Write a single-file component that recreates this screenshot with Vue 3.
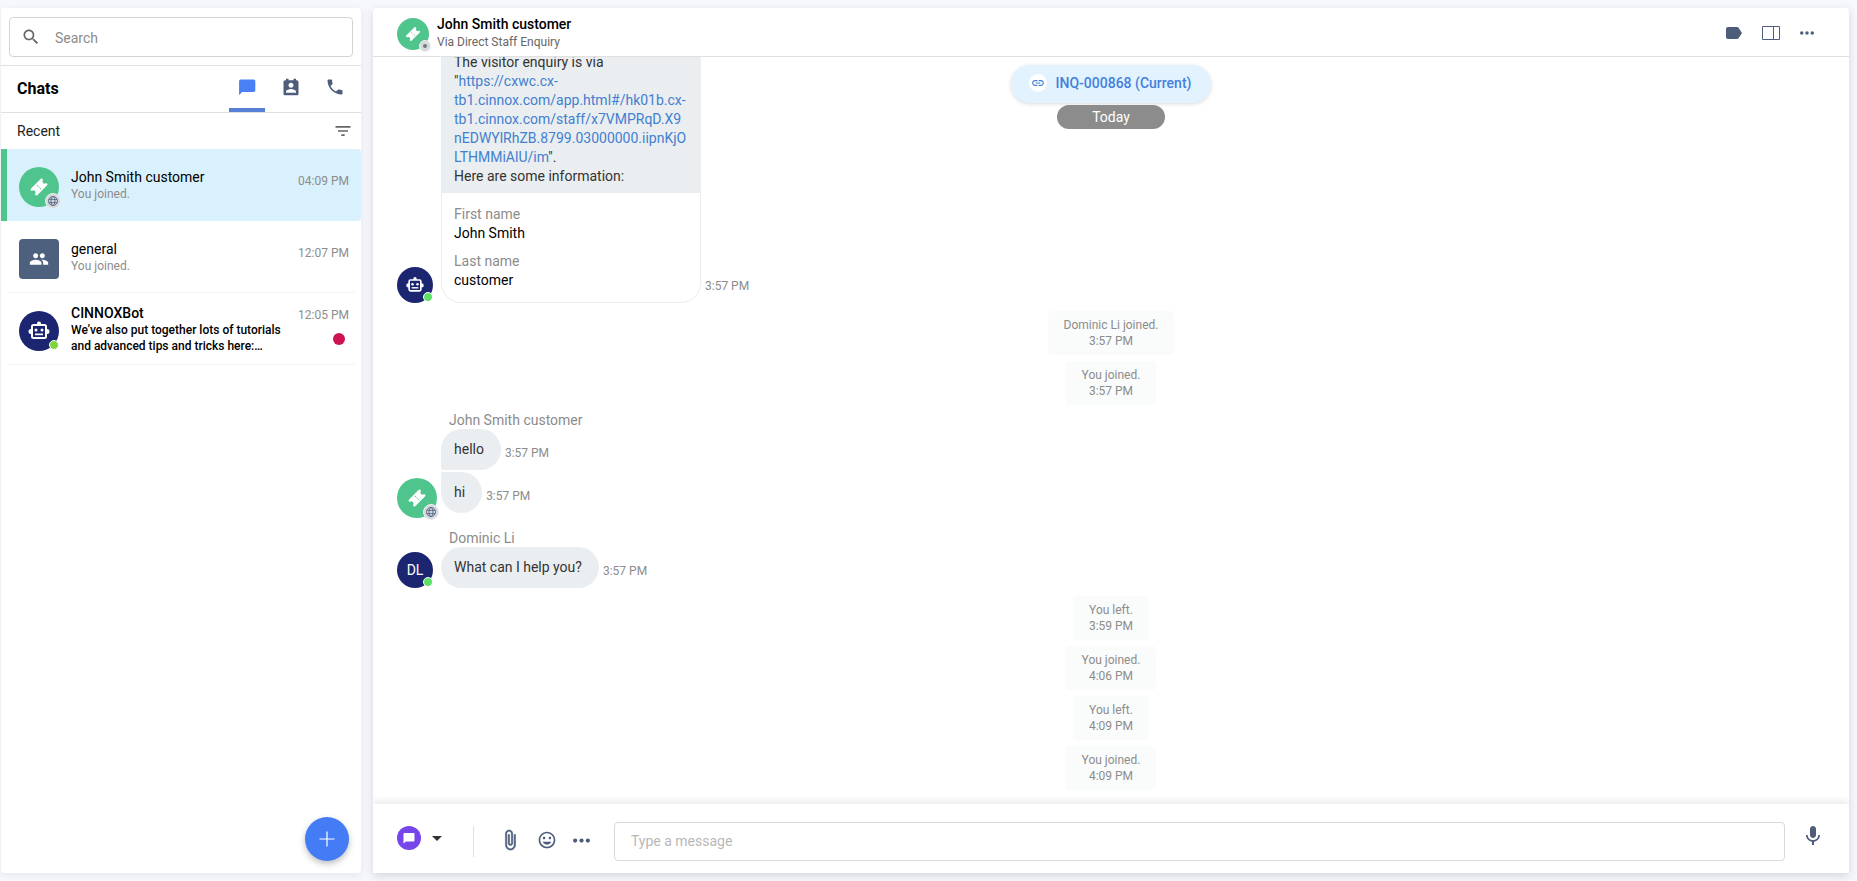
<template>
  <svg class="sprite" aria-hidden="true">
    <symbol id="i-search" viewBox="0 0 24 24">
      <path d="M15.5 14h-.79l-.28-.27C15.41 12.59 16 11.11 16 9.5 16 5.91 13.09 3 9.5 3S3 5.91 3 9.5 5.91 16 9.5 16c1.61 0 3.09-.59 4.23-1.57l.27.28v.79l5 4.99L20.49 19l-4.99-5zm-6 0C7.01 14 5 11.99 5 9.5S7.01 5 9.5 5 14 7.01 14 9.5 11.99 14 9.5 14z" />
    </symbol>
    <symbol id="i-chat" viewBox="0 0 24 24">
      <path d="M20 3H4.500c-1.100 0-2 .9-2 2v17l3.500-4H20c1.100 0 2-.9 2-2V5c0-1.100-.9-2-2-2z" />
    </symbol>
    <symbol id="i-contact" viewBox="0 0 24 24">
      <path d="M19 4h-1V2h-3v2H9V2H6v2H5c-1.100 0-2 .9-2 2v14c0 1.100.9 2 2 2h14c1.100 0 2-.9 2-2V6c0-1.100-.9-2-2-2zm-7 3c1.660 0 3 1.340 3 3s-1.340 3-3 3-3-1.340-3-3 1.340-3 3-3zm6 12H6v-1.400c0-2 4-3.100 6-3.100s6 1.100 6 3.100V19z" />
    </symbol>
    <symbol id="i-phone" viewBox="0 0 24 24">
      <path d="M6.62 10.79c1.44 2.83 3.76 5.14 6.59 6.59l2.2-2.2c.27-.27.67-.36 1.02-.24 1.12.37 2.33.57 3.57.57.55 0 1 .45 1 1V20c0 .55-.45 1-1 1-9.39 0-17-7.61-17-17 0-.55.45-1 1-1h3.5c.55 0 1 .45 1 1 0 1.25.2 2.45.57 3.57.11.35.03.74-.25 1.02l-2.2 2.2z" />
    </symbol>
    <symbol id="i-filter" viewBox="0 0 24 24">
      <path d="M3 6h18v2H3zM6 11h12v2H6zM10 16h4v2h-4z" />
    </symbol>
    <symbol id="i-ticket" viewBox="0 0 24 24">
      <g transform="rotate(-45 12 12)">
        <path d="M5 7.500h14a1 1 0 0 1 1 1v1.300a2.200 2.200 0 0 0 0 4.400v1.300a1 1 0 0 1-1 1H5a1 1 0 0 1-1-1v-1.300a2.200 2.200 0 0 0 0-4.400V8.500a1 1 0 0 1 1-1z" />
        <path d="M12 9.200v1.200M12 11.500v1.200M12 13.800v1.200" stroke="#4fc58d" stroke-width="1" />
      </g>
    </symbol>
    <symbol id="i-group" viewBox="0 0 24 24">
      <path d="M16 11c1.66 0 2.99-1.34 2.99-3S17.66 5 16 5c-1.66 0-3 1.34-3 3s1.34 3 3 3zm-8 0c1.66 0 2.99-1.34 2.99-3S9.66 5 8 5C6.34 5 5 6.34 5 8s1.34 3 3 3zm0 2c-2.33 0-7 1.17-7 3.5V19h14v-2.5c0-2.33-4.67-3.5-7-3.5zm8 0c-.29 0-.62.02-.97.05 1.16.84 1.97 1.97 1.97 3.45V19h6v-2.5c0-2.33-4.67-3.5-7-3.5z" />
    </symbol>
    <symbol id="i-bot" viewBox="0 0 24 24">
      <path d="M12 2.500a2 2 0 0 1 2 2V5h3.500A2.500 2.500 0 0 1 20 7.500V10a2.500 2.500 0 0 1 0 5v2.500a2.500 2.500 0 0 1-2.500 2.500h-11A2.500 2.500 0 0 1 4 17.500V15a2.500 2.500 0 0 1 0-5V7.500A2.500 2.500 0 0 1 6.500 5H10v-.5a2 2 0 0 1 2-2zM6 7v11h12V7z" fill-rule="evenodd" />
      <circle cx="9" cy="11" r="1.500" />
      <circle cx="15" cy="11" r="1.500" />
      <path d="M8 14.500h8v1.700H8z" />
    </symbol>
    <symbol id="i-globe" viewBox="0 0 12 12">
      <g fill="none" stroke="currentColor" stroke-width=".8">
        <circle cx="6" cy="6" r="4.500" />
        <ellipse cx="6" cy="6" rx="2" ry="4.500" />
        <path d="M1.900 4.400h8.200M1.900 7.600h8.200" />
      </g>
    </symbol>
    <symbol id="i-link" viewBox="0 0 24 24">
      <path d="M3.9 12c0-1.71 1.39-3.1 3.1-3.1h4V7H7c-2.76 0-5 2.24-5 5s2.24 5 5 5h4v-1.9H7c-1.71 0-3.1-1.39-3.1-3.1zM8 13h8v-2H8v2zm9-6h-4v1.9h4c1.71 0 3.1 1.39 3.1 3.1s-1.39 3.1-3.1 3.1h-4V17h4c2.76 0 5-2.24 5-5s-2.24-5-5-5z" />
    </symbol>
    <symbol id="i-label" viewBox="0 0 16 12">
      <path d="M2 0h9c.7 0 1.200.3 1.600.8L16 6l-3.400 5.200c-.4.5-.9.8-1.600.8H2c-1.100 0-2-.9-2-2V2C0 .9.9 0 2 0z" />
    </symbol>
    <symbol id="i-panel" viewBox="0 0 18 14">
      <path d="M.5.5h17v13H.5zM11.500.5v13" fill="none" stroke="currentColor" />
    </symbol>
    <symbol id="i-dots" viewBox="0 0 16 16">
      <circle cx="2" cy="8" r="2" />
      <circle cx="8" cy="8" r="2" />
      <circle cx="14" cy="8" r="2" />
    </symbol>
    <symbol id="i-clip" viewBox="0 0 24 24">
      <path d="M16.5 6v11.5c0 2.21-1.79 4-4 4s-4-1.79-4-4V5c0-1.38 1.12-2.5 2.5-2.5s2.5 1.12 2.5 2.5v10.5c0 .55-.45 1-1 1s-1-.45-1-1V6H10v9.5c0 1.38 1.12 2.5 2.5 2.5s2.5-1.12 2.5-2.5V5c0-2.21-1.79-4-4-4S7 2.79 7 5v12.5c0 3.04 2.46 5.5 5.5 5.5s5.5-2.46 5.5-5.5V6h-1.5z" stroke="currentColor" stroke-width=".6" />
    </symbol>
    <symbol id="i-smile" viewBox="0 0 24 24">
      <path d="M11.99 2C6.47 2 2 6.48 2 12s4.47 10 9.99 10C17.52 22 22 17.52 22 12S17.52 2 11.99 2zM12 20c-4.42 0-8-3.58-8-8s3.58-8 8-8 8 3.58 8 8-3.58 8-8 8zm3.5-9c.83 0 1.5-.67 1.5-1.5S16.33 8 15.5 8 14 8.67 14 9.5s.67 1.5 1.5 1.5zm-7 0c.83 0 1.5-.67 1.5-1.5S9.33 8 8.5 8 7 8.67 7 9.5 7.67 11 8.5 11zm3.5 6.5c2.33 0 4.31-1.46 5.11-3.5H6.89c.8 2.04 2.78 3.5 5.11 3.5z" />
    </symbol>
    <symbol id="i-mic" viewBox="0 0 24 24">
      <path d="M12 14c1.66 0 2.99-1.34 2.99-3L15 5c0-1.66-1.34-3-3-3S9 3.34 9 5v6c0 1.66 1.34 3 3 3zm5.3-3c0 3-2.54 5.1-5.3 5.1S6.7 14 6.7 11H5c0 3.41 2.72 6.23 6 6.72V21h2v-3.28c3.28-.48 6-3.3 6-6.72h-1.7z" />
    </symbol>
  </svg>

  <div class="app">
    <aside class="sidebar">
      <div class="search-wrap">
        <label class="search">
          <svg class="icon-20"><use href="#i-search" /></svg>
          <input v-model="query" type="text" placeholder="Search" aria-label="Search">
        </label>
      </div>

      <div class="tabs">
        <h1>Chats</h1>
        <button
          v-for="t in tabs"
          :key="t.name"
          type="button"
          class="tab"
          :class="{ active: tab === t.name }"
          :aria-label="t.name"
          @click="tab = t.name"
        >
          <svg class="icon-20"><use :href="t.icon" /></svg>
        </button>
      </div>

      <div class="recent">
        <span>Recent</span>
        <button type="button" aria-label="Filter">
          <svg class="icon-20"><use href="#i-filter" /></svg>
        </button>
      </div>

      <ul class="chats">
        <li v-for="c in chats" :key="c.name" class="chat" :class="{ selected: c.selected, unread: c.unread }">
          <div class="avatar large" :class="c.type">
            <svg :class="c.type === 'space' ? 'icon-20' : 'icon-24'"><use :href="c.icon" /></svg>
            <span v-if="c.type === 'customer'" class="badge"><svg><use href="#i-globe" /></svg></span>
            <span v-if="c.type === 'bot'" class="online lime"></span>
          </div>
          <div class="chat-text">
            <div class="chat-name">{{ c.name }}</div>
            <div class="chat-last">{{ c.last }}</div>
          </div>
          <div class="chat-side">
            <time>{{ c.time }}</time>
            <span v-if="c.unread" class="dot"></span>
          </div>
        </li>
      </ul>

      <button type="button" class="fab" aria-label="New chat">
        <svg viewBox="0 0 16 16"><path d="M8 .5v15M.5 8h15" fill="none" stroke="#fff" stroke-width="1.200" /></svg>
      </button>
    </aside>

    <main class="room">
      <header class="room-head">
        <div class="avatar small customer">
          <svg class="icon-20"><use href="#i-ticket" /></svg>
          <span class="badge tiny"></span>
        </div>
        <div class="room-title">
          <h2>John Smith customer</h2>
          <p>Via Direct Staff Enquiry</p>
        </div>
        <div class="room-actions">
          <button type="button" aria-label="Label"><svg class="label-icon"><use href="#i-label" /></svg></button>
          <button type="button" aria-label="Panel"><svg class="panel-icon"><use href="#i-panel" /></svg></button>
          <button type="button" aria-label="More"><svg class="dots-icon"><use href="#i-dots" /></svg></button>
        </div>
      </header>

      <section class="stream">
        <div class="floating">
          <button type="button" class="inquiry">
            <span><svg><use href="#i-link" /></svg></span>
            INQ-000868 (Current)
          </button>
          <div class="day">Today</div>
        </div>

        <div class="group">
          <div class="who">
            <div class="avatar medium bot">
              <svg class="icon-20"><use href="#i-bot" /></svg>
              <span class="online"></span>
            </div>
          </div>
          <div class="lines">
            <div class="line">
              <div class="card">
                <p class="card-text">
                  The visitor enquiry is via "<a href="#">https://cxwc.cx-tb1.cinnox.com/app.html#/hk01b.cx-tb1.cinnox.com/staff/x7VMPRqD.X9nEDWYlRhZB.8799.03000000.iipnKjOLTHMMiAlU/im</a>".<br>
                  Here are some information:
                </p>
                <dl>
                  <dt>First name</dt>
                  <dd>John Smith</dd>
                  <dt>Last name</dt>
                  <dd>customer</dd>
                </dl>
              </div>
              <time>3:57 PM</time>
            </div>
          </div>
        </div>

        <div class="events">
          <div v-for="e in joined" :key="e.text" class="event">{{ e.text }}<br>{{ e.time }}</div>
        </div>

        <div v-for="g in groups" :key="g.name" class="group" :class="g.type">
          <div class="who">
            <div v-if="g.type === 'visitor'" class="avatar large customer">
              <svg class="icon-24"><use href="#i-ticket" /></svg>
              <span class="badge"><svg><use href="#i-globe" /></svg></span>
            </div>
            <div v-else class="avatar medium bot">
              DL
              <span class="online"></span>
            </div>
          </div>
          <div class="lines">
            <div class="author">{{ g.name }}</div>
            <div v-for="m in g.messages" :key="m" class="line">
              <div class="bubble">{{ m }}</div>
              <time>3:57 PM</time>
            </div>
          </div>
        </div>

        <div class="events">
          <div v-for="(e, i) in later" :key="i" class="event">{{ e.text }}<br>{{ e.time }}</div>
        </div>
      </section>

      <footer class="composer">
        <button type="button" class="channel" aria-label="Channel">
          <span><svg viewBox="0 0 12 12"><path d="M1.500 1h9c.5 0 1 .4 1 1v6.500c0 .6-.5 1-1 1H3L.5 11.500V2c0-.6.5-1 1-1z" fill="#fff" /></svg></span>
          <i></i>
        </button>
        <div class="tools">
          <button type="button" aria-label="Attach"><svg class="clip-icon"><use href="#i-clip" /></svg></button>
          <button type="button" aria-label="Emoji"><svg class="icon-20"><use href="#i-smile" /></svg></button>
          <button type="button" aria-label="More tools"><svg class="more-icon"><use href="#i-dots" /></svg></button>
        </div>
        <input v-model="draft" type="text" placeholder="Type a message" aria-label="Message">
        <button type="button" class="mic" aria-label="Record"><svg><use href="#i-mic" /></svg></button>
      </footer>
    </main>
  </div>
</template>

<script setup>
import { ref } from 'vue'

const query = ref('')
const draft = ref('')
const tab = ref('Chats')

const tabs = [
  { name: 'Chats', icon: '#i-chat' },
  { name: 'Contacts', icon: '#i-contact' },
  { name: 'Calls', icon: '#i-phone' }
]

const chats = [
  { name: 'John Smith customer', last: 'You joined.', time: '04:09 PM', type: 'customer', icon: '#i-ticket', selected: true },
  { name: 'general', last: 'You joined.', time: '12:07 PM', type: 'space', icon: '#i-group' },
  { name: 'CINNOXBot', last: 'We’ve also put together lots of tutorials and advanced tips and tricks here:…', time: '12:05 PM', type: 'bot', icon: '#i-bot', unread: true }
]

const joined = [
  { text: 'Dominic Li joined.', time: '3:57 PM' },
  { text: 'You joined.', time: '3:57 PM' }
]

const groups = [
  { name: 'John Smith customer', type: 'visitor', messages: ['hello', 'hi'] },
  { name: 'Dominic Li', type: 'staff', messages: ['What can I help you?'] }
]

const later = [
  { text: 'You left.', time: '3:59 PM' },
  { text: 'You joined.', time: '4:06 PM' },
  { text: 'You left.', time: '4:09 PM' },
  { text: 'You joined.', time: '4:09 PM' }
]
</script>

<style>
body {
  background: #f7f8fc;
}
</style>

<style scoped>
.sprite {
  position: absolute;
  width: 0;
  height: 0;
}
.app {
  display: flex;
  gap: 12px;
  box-sizing: border-box;
  height: 100vh;
  padding: 8px 8px 8px 1px;
  font-family: Roboto, "Liberation Sans", sans-serif;
  font-size: 14px;
  line-height: 19px;
  color: #000;
}
.app * {
  box-sizing: border-box;
}
button {
  display: flex;
  align-items: center;
  justify-content: center;
  margin: 0;
  padding: 0;
  border: 0;
  background: none;
  color: #4d5d7a;
  font: inherit;
  cursor: pointer;
}
input {
  min-width: 0;
  font: inherit;
  outline: none;
}
h1, h2, p, ul, dl, dd {
  margin: 0;
  padding: 0;
}
svg {
  display: block;
  fill: currentColor;
}
.icon-20 {
  width: 20px;
  height: 20px;
}
.icon-24 {
  width: 24px;
  height: 24px;
}

/* sidebar */
.sidebar {
  position: relative;
  flex: 0 0 360px;
  background: #fff;
  border-radius: 4px;
  box-shadow: 0 2px 8px rgba(60, 70, 110, 0.1);
}
.search-wrap {
  padding: 9px 8px 8px;
  border-bottom: 1px solid #e0e0e0;
}
.search {
  display: flex;
  align-items: center;
  gap: 14px;
  height: 40px;
  padding: 0 11px;
  border: 1px solid #d4d4d4;
  border-radius: 4px;
  color: #666;
}
.search input {
  flex: 1;
  padding: 2px 0 0;
  border: 0;
}
.search input::placeholder {
  color: #8c8c8c;
  opacity: 1;
}
.tabs {
  display: flex;
  align-items: stretch;
  gap: 8px;
  height: 47px;
  padding: 0 8px 0 16px;
  border-bottom: 1px solid #e0e0e0;
}
.tabs h1 {
  flex: 1;
  font-size: 16px;
  font-weight: 700;
  line-height: 46px;
}
.tab {
  width: 36px;
  padding-bottom: 5px;
}
.tab.active {
  color: #4a80f5;
  background: linear-gradient(#5580d6, #5580d6) bottom / 100% 4px no-repeat;
}
.recent {
  display: flex;
  align-items: center;
  justify-content: space-between;
  height: 36px;
  padding: 0 8px 0 16px;
  color: #222;
}
.recent button {
  color: #666;
}
.chats {
  list-style: none;
}
.chat {
  display: flex;
  gap: 12px;
  height: 72px;
  padding: 18px 12px 0 18px;
}
.chat:not(.selected) {
  background: linear-gradient(#f5f5f5, #f5f5f5) bottom / calc(100% - 12px) 1px no-repeat;
}
.chat.selected {
  padding-left: 12px;
  border-left: 6px solid #4fc58d;
  border-radius: 0 4px 4px 0;
  background: #d9f1fc;
}
.chat-text {
  flex: 0 0 214px;
}
.chat-name {
  padding-top: 1px;
  line-height: 18px;
}
.chat-last {
  font-size: 12px;
  line-height: 16px;
  color: #8c8c8c;
}
.unread .chat-text {
  margin-top: -8px;
  font-weight: 500;
}
.unread .chat-last {
  color: #000;
}
.chat-side {
  display: flex;
  flex: 1;
  flex-direction: column;
  align-items: flex-end;
  gap: 8px;
  padding-top: 5px;
}
.unread .chat-side {
  padding-top: 0;
  margin-top: -5px;
}
time {
  font-size: 12px;
  color: #8c8c8c;
  white-space: nowrap;
}
.dot {
  width: 12px;
  height: 12px;
  margin-right: 4px;
  border-radius: 50%;
  background: #ce1450;
}
.fab {
  position: absolute;
  right: 12px;
  bottom: 12px;
  width: 44px;
  height: 44px;
  border-radius: 50%;
  background: #437cf5;
  box-shadow: 0 3px 6px rgba(0, 0, 0, 0.25);
}
.fab svg {
  width: 16px;
  height: 16px;
}

/* avatars */
.avatar {
  position: relative;
  display: flex;
  flex: none;
  align-items: center;
  justify-content: center;
  border-radius: 50%;
  color: #fff;
}
.avatar.large {
  width: 40px;
  height: 40px;
}
.avatar.medium {
  width: 36px;
  height: 36px;
}
.avatar.small {
  width: 32px;
  height: 32px;
}
.avatar.customer {
  background: #4fc58d;
}
.avatar.space {
  border-radius: 4px;
  background: #4d617f;
}
.avatar.bot {
  background: #1c2670;
}
.badge {
  position: absolute;
  right: -2px;
  bottom: -2px;
  display: flex;
  align-items: center;
  justify-content: center;
  width: 16px;
  height: 16px;
  border: 1px solid #eee;
  border-radius: 50%;
  background: #d4d8df;
  color: #4d5d7a;
}
.badge svg {
  width: 12px;
  height: 12px;
}
.badge.tiny {
  width: 12px;
  height: 12px;
}
.badge.tiny::after {
  content: "";
  width: 4px;
  height: 4px;
  border-radius: 50%;
  background: #777;
}
.online {
  position: absolute;
  right: 0;
  bottom: 1px;
  width: 10px;
  height: 10px;
  border: 1px solid #fff;
  border-radius: 50%;
  background: #5ce065;
}
.online.lime {
  background: #7fd63a;
}

/* room */
.room {
  display: flex;
  flex: 1;
  flex-direction: column;
  min-width: 0;
  background: #fff;
  border-radius: 4px 4px 0 0;
  box-shadow: 0 3px 10px rgba(50, 60, 90, 0.18);
}
.room-head {
  display: flex;
  flex: none;
  align-items: center;
  gap: 8px;
  height: 49px;
  padding: 3px 35px 0 24px;
  border-bottom: 1px solid #e0e0e0;
}
.room-title {
  flex: 1;
  padding-bottom: 3px;
}
.room-title h2 {
  font-size: 14px;
  font-weight: 500;
}
.room-title p {
  font-size: 12px;
  line-height: 16px;
  color: #666;
}
.room-actions {
  display: flex;
  gap: 20px;
  padding-bottom: 2px;
}
.label-icon {
  width: 16px;
  height: 12px;
}
.panel-icon {
  width: 18px;
  height: 14px;
}
.dots-icon {
  width: 14px;
  height: 14px;
}
.stream {
  position: relative;
  display: flex;
  flex: 1;
  flex-direction: column;
  justify-content: flex-end;
  min-height: 0;
  padding: 0 24px 14px;
  overflow: hidden;
}
.floating {
  position: absolute;
  top: 8px;
  left: 0;
  right: 0;
  display: flex;
  flex-direction: column;
  align-items: center;
  gap: 2px;
}
.inquiry {
  gap: 9px;
  height: 38px;
  padding: 0 20px 2px 18px;
  border-radius: 19px;
  background: #e2f2fe;
  box-shadow: 0 1px 4px rgba(0, 0, 0, 0.15);
  color: #437fdc;
  font-weight: 500;
}
.inquiry span {
  padding: 2px;
  border-radius: 50%;
  background: #fff;
}
.inquiry svg {
  width: 14px;
  height: 14px;
}
.day {
  width: 108px;
  border-radius: 12px;
  background: #8c8c8c;
  color: #fff;
  line-height: 24px;
  text-align: center;
}
.group {
  display: flex;
  flex: none;
  align-items: flex-end;
}
.who {
  flex: 0 0 44px;
}
.line {
  display: flex;
  align-items: flex-end;
  gap: 4px;
}
.line + .line {
  margin-top: 2px;
}
.line time {
  padding-bottom: 7px;
}
.card {
  width: 260px;
  border: 1px solid #ececec;
  border-radius: 20px;
  overflow: hidden;
}
.card-text {
  padding: 12px 12px 7px;
  background: #eaeef1;
  color: #333;
  overflow-wrap: anywhere;
}
.card a {
  color: #437fcf;
  text-decoration: none;
}
.card dl {
  padding: 12px 12px;
}
.card dt {
  color: #8c8c8c;
}
.card dd + dt {
  margin-top: 9px;
}
.events {
  display: flex;
  flex: none;
  flex-direction: column;
  align-items: center;
  gap: 6px;
  padding: 8px 0 6px;
}
.events:last-child {
  padding-bottom: 0;
}
.event {
  padding: 6px 16px;
  border-radius: 4px;
  background: #fafbfb;
  color: #8c8c8c;
  font-size: 12px;
  line-height: 16px;
  text-align: center;
}
.author {
  padding-left: 8px;
  color: #8c8c8c;
  line-height: 18px;
}
.bubble {
  padding: 11px 17px 11px 13px;
  border-radius: 21px;
  background: #eaeef1;
  color: #333;
}
.visitor {
  margin-bottom: 11px;
}
.visitor .lines {
  padding-bottom: 5px;
}
.visitor .line:nth-child(2) .bubble {
  border-bottom-left-radius: 2px;
}
.visitor .line:last-child .bubble {
  border-top-left-radius: 2px;
}

/* composer */
.composer {
  position: relative;
  display: flex;
  flex: none;
  align-items: center;
  height: 69px;
  padding: 6px 24px 0;
  background: #fff;
  box-shadow: 0 -2px 8px rgba(0, 0, 0, 0.1);
  clip-path: inset(-10px 0 0 0);
}
.channel {
  gap: 11px;
  padding: 0 32px 7px 0;
  background: linear-gradient(#e0e0e0, #e0e0e0) right / 1px 100% no-repeat;
}
.channel span {
  display: flex;
  align-items: center;
  justify-content: center;
  width: 24px;
  height: 24px;
  border-radius: 50%;
  background: #7646ea;
}
.channel svg {
  width: 12px;
  height: 12px;
}
.channel i {
  border: 5px solid transparent;
  border-top-color: #333;
  border-bottom: 0;
}
.tools {
  display: flex;
  gap: 16px;
  padding: 0 24px 3px 25px;
}
.clip-icon {
  width: 22px;
  height: 22px;
}
.more-icon {
  width: 17px;
  height: 17px;
}
.composer input {
  flex: 1;
  height: 39px;
  padding: 0 16px 2px;
  border: 1px solid #d9d9d9;
  border-radius: 4px;
}
.composer input::placeholder {
  color: #b8b8b8;
  opacity: 1;
}
.mic {
  padding: 0 0 11px 16px;
}
.mic svg {
  width: 24px;
  height: 24px;
}
</style>
